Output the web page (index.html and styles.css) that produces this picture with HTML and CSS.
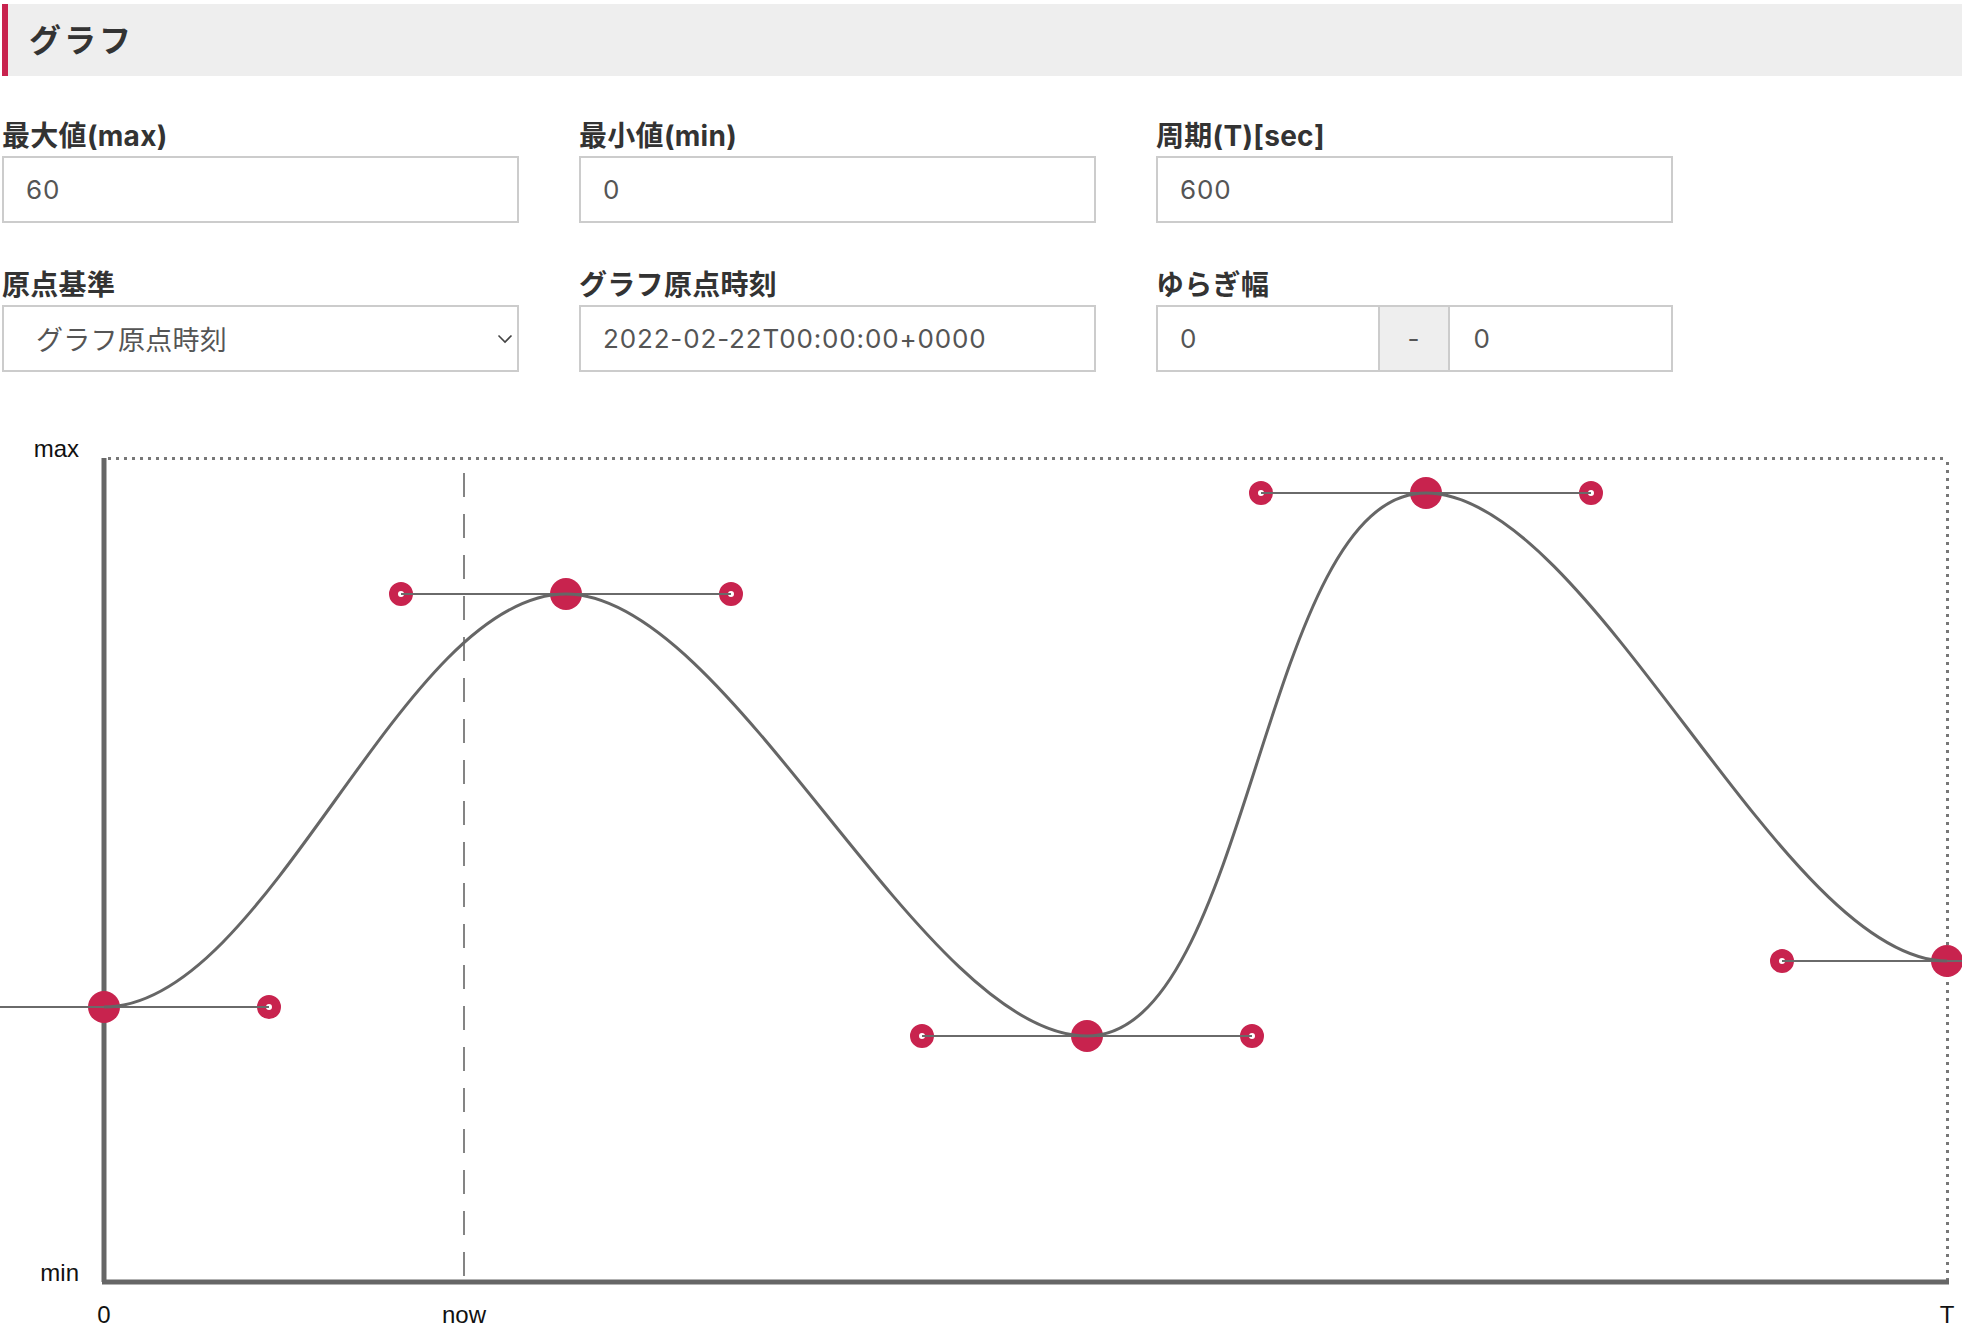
FILE: index.html
```html
<!DOCTYPE html>
<html lang="ja">
<head>
<meta charset="utf-8">
<title>グラフ</title>
<link rel="stylesheet" href="styles.css">
</head>
<body>
<div class="page">
  <h2 class="section-title">グラフ</h2>
  <div class="form-grid">
    <div class="field">
      <label class="field-label">最大値(max)</label>
      <input class="text-input" type="text" value="60">
    </div>
    <div class="field">
      <label class="field-label">最小値(min)</label>
      <input class="text-input" type="text" value="0">
    </div>
    <div class="field">
      <label class="field-label">周期(T)[sec]</label>
      <input class="text-input" type="text" value="600">
    </div>
    <div class="field">
      <label class="field-label">原点基準</label>
      <div class="select-wrap">
        <select class="select-input">
          <option>グラフ原点時刻</option>
        </select>
        <svg class="select-chevron" width="16" height="10" viewBox="0 0 16 10"><path d="M1.5 1.5 L8 8 L14.5 1.5" fill="none" stroke="#444" stroke-width="1.6"/></svg>
      </div>
    </div>
    <div class="field">
      <label class="field-label">グラフ原点時刻</label>
      <input class="text-input" type="text" value="2022-02-22T00:00:00+0000">
    </div>
    <div class="field">
      <label class="field-label">ゆらぎ幅</label>
      <div class="input-group">
        <input class="text-input group-input" type="text" value="0">
        <span class="group-addon">-</span>
        <input class="text-input group-input group-input-right" type="text" value="0">
      </div>
    </div>
  </div>
  <svg class="chart" width="1962" height="930" viewBox="0 400 1962 930">
    <text class="axis-label" x="79" y="457" text-anchor="end">max</text>
    <text class="axis-label" x="79" y="1281" text-anchor="end">min</text>
    <text class="axis-label" x="104" y="1323" text-anchor="middle">0</text>
    <text class="axis-label" x="464" y="1323" text-anchor="middle">now</text>
    <text class="axis-label" x="1947" y="1323" text-anchor="middle">T</text>

    <line class="frame-dotted" x1="108" y1="458.5" x2="1947.5" y2="458.5"/>
    <line class="frame-dotted" x1="1947.5" y1="462" x2="1947.5" y2="1280"/>
    <line class="axis" x1="104" y1="458" x2="104" y2="1282"/>
    <line class="axis" x1="102" y1="1282" x2="1949" y2="1282"/>
    <line class="now-line" x1="464" y1="473" x2="464" y2="1282"/>

    <circle class="knot" cx="104" cy="1007" r="16"/>
    <circle class="knot" cx="566" cy="594" r="16"/>
    <circle class="knot" cx="1087" cy="1036" r="16"/>
    <circle class="knot" cx="1426" cy="493" r="16"/>
    <circle class="knot" cx="1947" cy="961" r="16"/>

    <circle class="handle" cx="269" cy="1007" r="7.5"/>
    <circle class="handle" cx="401" cy="594" r="7.5"/>
    <circle class="handle" cx="731" cy="594" r="7.5"/>
    <circle class="handle" cx="922" cy="1036" r="7.5"/>
    <circle class="handle" cx="1252" cy="1036" r="7.5"/>
    <circle class="handle" cx="1261" cy="493" r="7.5"/>
    <circle class="handle" cx="1591" cy="493" r="7.5"/>
    <circle class="handle" cx="1782" cy="961" r="7.5"/>

    <line class="handle-line" x1="0" y1="1007" x2="269" y2="1007"/>
    <line class="handle-line" x1="401" y1="594" x2="731" y2="594"/>
    <line class="handle-line" x1="922" y1="1036" x2="1252" y2="1036"/>
    <line class="handle-line" x1="1261" y1="493" x2="1591" y2="493"/>
    <line class="handle-line" x1="1782" y1="961" x2="1962" y2="961"/>

    <path class="curve" d="M104 1007 C269 1007 401 594 566 594 C731 594 922 1036 1087 1036 C1252 1036 1261 493 1426 493 C1591 493 1782 961 1947 961"/>
  </svg>
</div>
</body>
</html>
```
FILE: styles.css
```css
html, body {
  margin: 0;
  padding: 0;
  background: #fff;
}
body {
  overflow: hidden;
  font-family: Inter, "Noto Sans CJK JP", sans-serif;
  color: #333;
}
.page {
  padding: 4px 0 0 2px;
}
.section-title {
  margin: 0;
  height: 72px;
  box-sizing: border-box;
  background: #eee;
  border-left: 6px solid #c8234e;
  padding: 0 0 4px 21px;
  display: flex;
  align-items: center;
  font-family: "Noto Sans CJK JP", sans-serif;
  font-size: 32px;
  font-weight: 700;
  letter-spacing: 3px;
  color: #333;
}
.form-grid {
  display: grid;
  grid-template-columns: repeat(3, 517px);
  column-gap: 60px;
  row-gap: 44px;
  margin-top: 42px;
}
.field {
  display: flex;
  flex-direction: column;
}
.field-label {
  display: block;
  font-size: 28px;
  line-height: 32px;
  letter-spacing: 0.3px;
  font-weight: 700;
  color: #333;
  padding-top: 2px;
  margin-bottom: 4px;
}
.text-input {
  box-sizing: border-box;
  width: 100%;
  height: 67px;
  margin: 0;
  border: 2px solid #ccc;
  border-radius: 0;
  padding: 0 22px;
  font-family: Inter, "Noto Sans CJK JP", sans-serif;
  font-size: 26px;
  letter-spacing: 0.85px;
  color: #555;
  background: #fff;
  outline: none;
}
.select-wrap {
  position: relative;
}
.select-input {
  box-sizing: border-box;
  width: 100%;
  height: 67px;
  margin: 0;
  border: 2px solid #ccc;
  border-radius: 0;
  padding: 0 40px 0 32px;
  font-family: "Noto Sans CJK JP", sans-serif;
  font-size: 27px;
  letter-spacing: 0.3px;
  color: #555;
  background: #fff;
  appearance: none;
  -webkit-appearance: none;
  outline: none;
}
.select-chevron {
  position: absolute;
  right: 6px;
  top: 29px;
}
.input-group {
  display: flex;
  height: 67px;
}
.group-input {
  flex: 1 1 0;
  min-width: 0;
}
.group-input-right {
  padding-left: 24px;
}
.group-addon {
  box-sizing: border-box;
  width: 68px;
  flex: 0 0 68px;
  display: flex;
  align-items: center;
  justify-content: center;
  background: #eee;
  border-top: 2px solid #ccc;
  border-bottom: 2px solid #ccc;
  font-size: 26px;
  color: #555;
}
.chart {
  display: block;
  margin-top: 28px;
  margin-left: -2px;
}
.axis-label {
  font-family: "Liberation Sans", Arial, sans-serif;
  font-size: 24px;
  fill: #111;
}
.frame-dotted {
  stroke: #777;
  stroke-width: 3;
  stroke-dasharray: 3 5;
}
.axis {
  stroke: #666;
  stroke-width: 5;
}
.now-line {
  stroke: #666;
  stroke-width: 1.6;
  stroke-dasharray: 24 17;
}
.knot {
  fill: #c8234e;
}
.handle {
  fill: #fff;
  stroke: #c8234e;
  stroke-width: 9;
}
.handle-line {
  stroke: #6a6a6a;
  stroke-width: 2;
}
.curve {
  fill: none;
  stroke: #666;
  stroke-width: 3;
}
```
